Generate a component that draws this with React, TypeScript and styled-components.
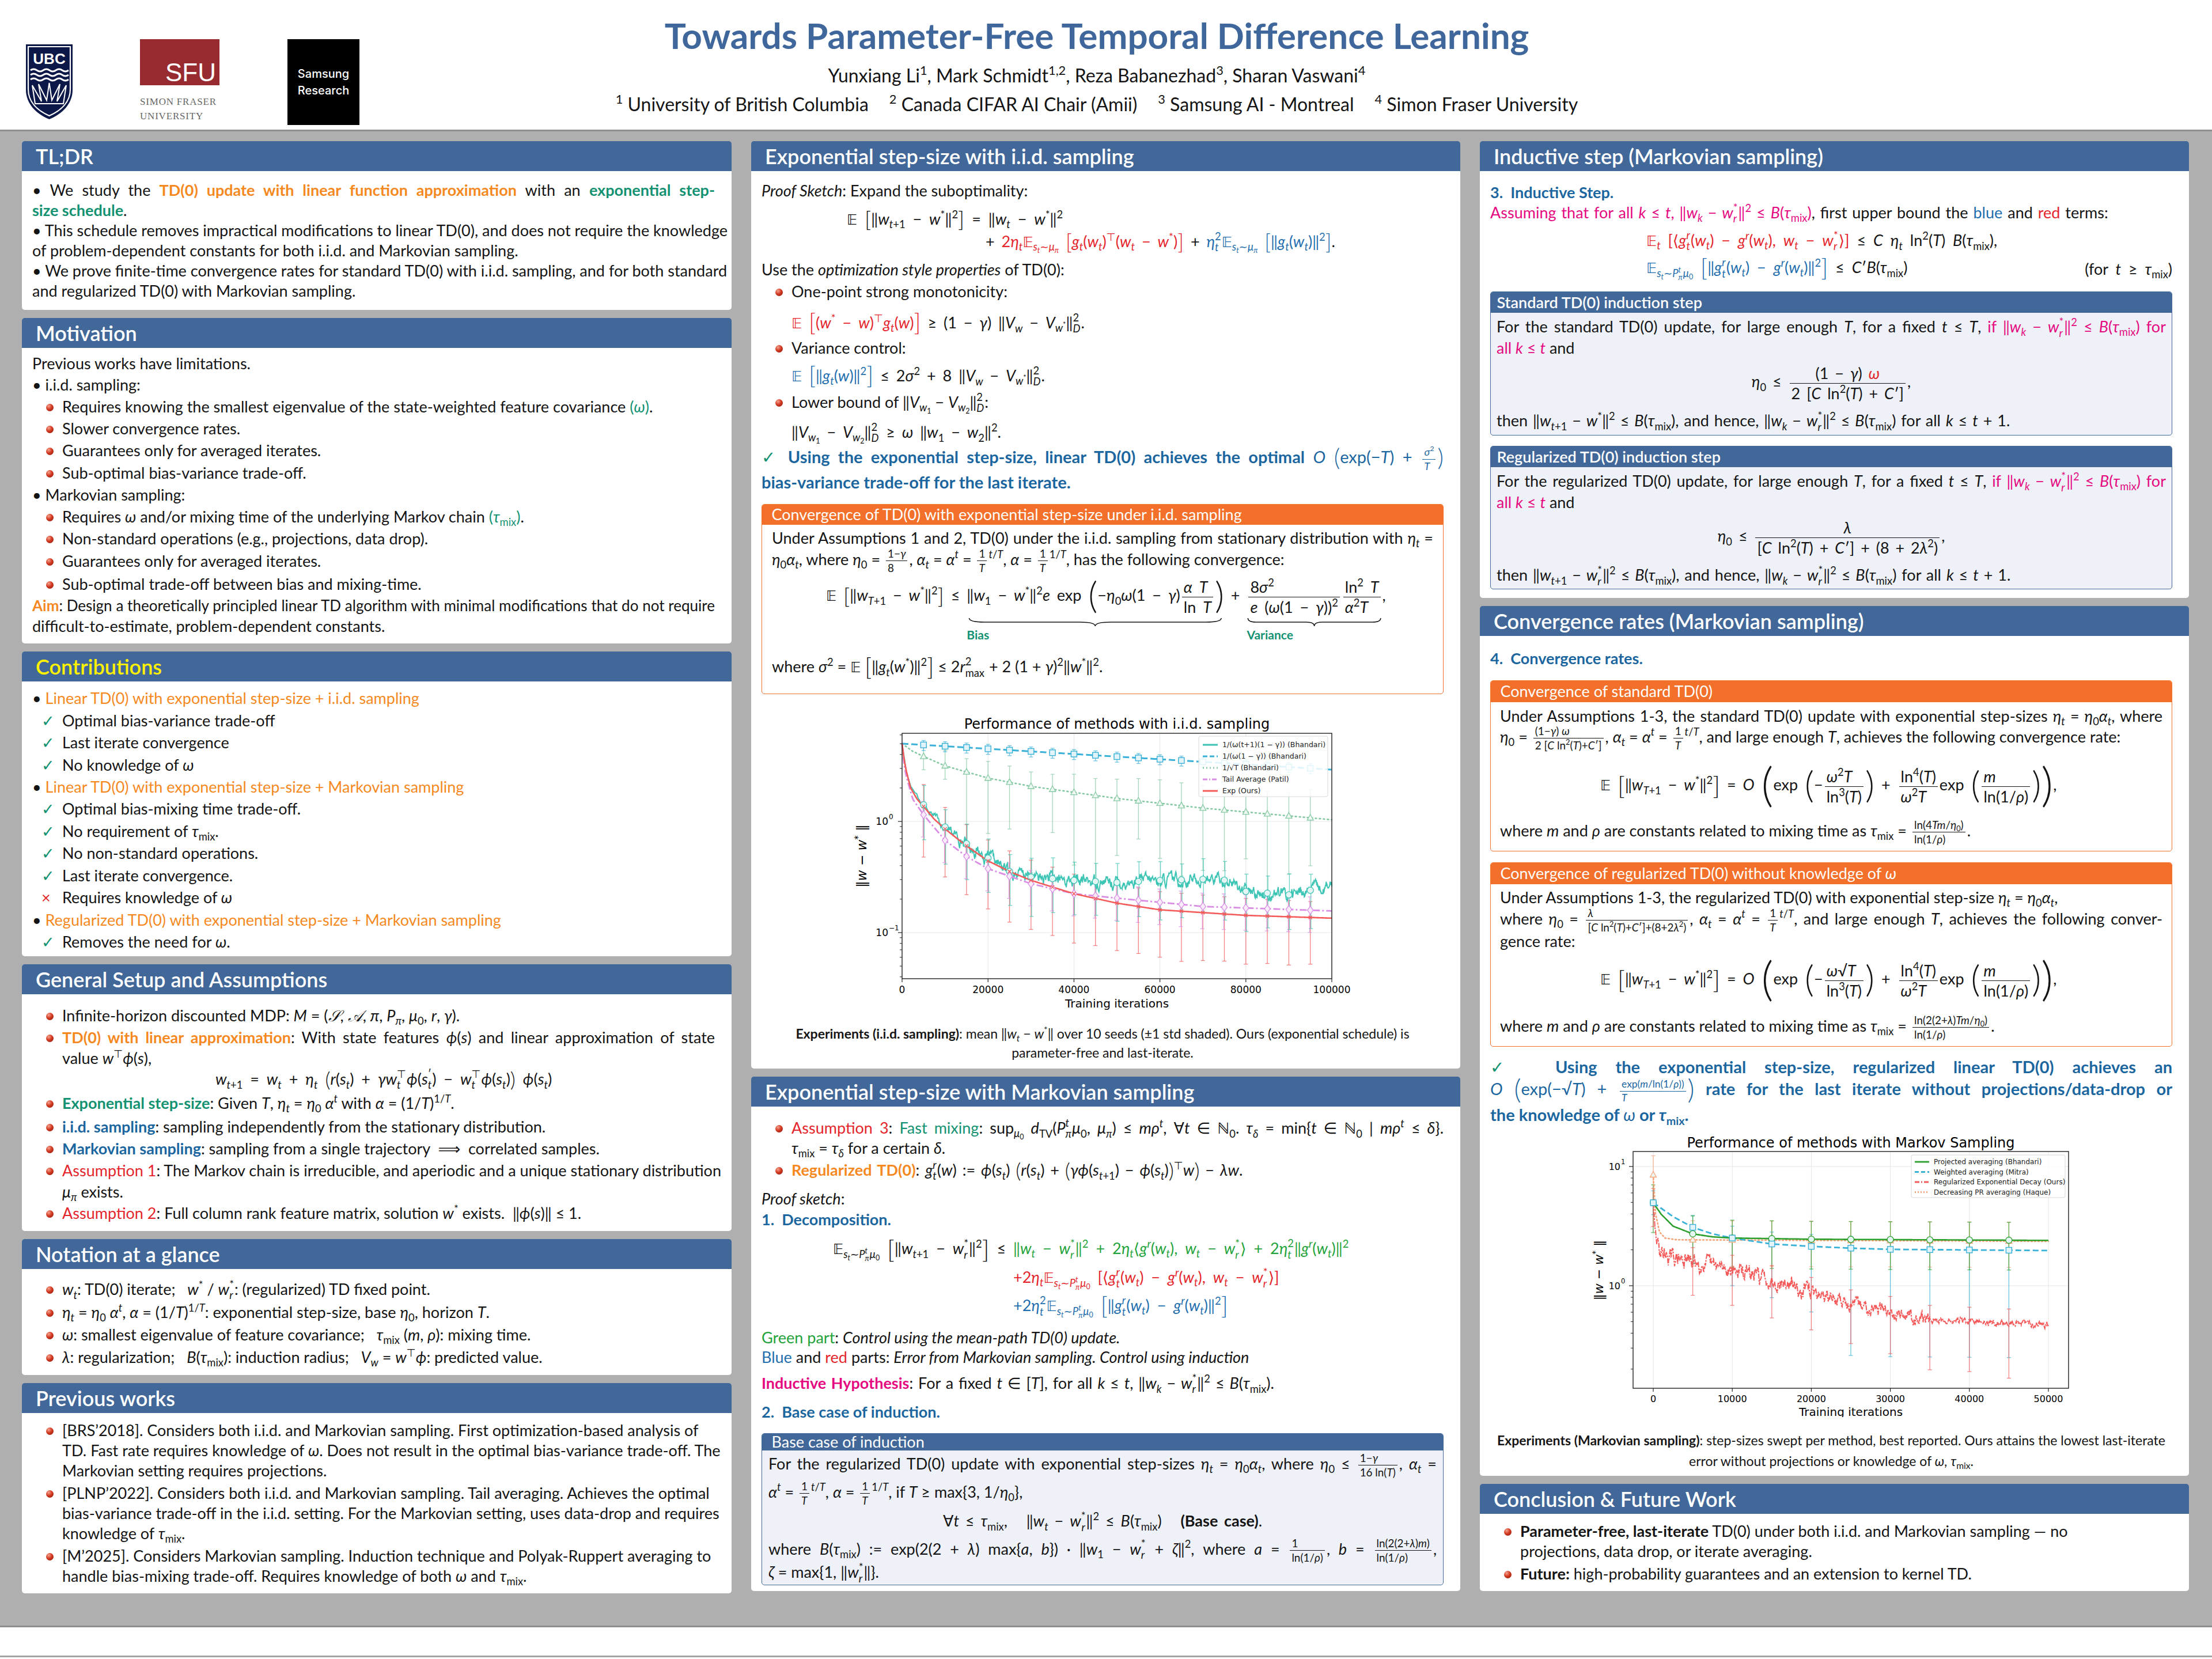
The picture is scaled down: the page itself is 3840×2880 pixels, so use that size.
import React from 'react';
import styled, { createGlobalStyle } from 'styled-components';

const COL = {
  head: '#426899',
  title: '#3f679b',
  orange: '#f5891f',
  teal: '#139272',
  blue: '#1b669f',
  sky: '#1f6eae',
  red: '#e4252b',
  pink: '#e5097f',
  green: '#1fa33a',
  box: '#f2702a',
  text: '#141414',
};

const Global = createGlobalStyle`
  html, body { margin: 0; padding: 0; }
  body {
    width: 3840px;
    background: #fff;
    font-family: Lato, "Noto Sans", "DejaVu Sans", sans-serif;
    color: ${COL.text};
  }
`;

/* ---------- page frame ---------- */

const Page = styled.div`
  width: 3840px;
  height: 2880px;
  display: flex;
  flex-direction: column;
  background: #fff;
`;

const Top = styled.header`
  height: 225px;
  border-bottom: 3px solid #8e8e8e;
  display: grid;
  grid-template-columns: 680px 1fr 712px;
  background: #fff;
`;

const Logos = styled.div`
  display: flex;
  align-items: flex-start;
  gap: 116px;
  padding: 68px 0 0 44px;
`;

const UbcWrap = styled.div`
  margin-top: 8px;
`;

const Samsung = styled.div`
  width: 125px;
  height: 149px;
  background: #000;
  color: #fff;
  display: flex;
  flex-direction: column;
  align-items: center;
  justify-content: center;
  font: 500 20px/29px Inter, "Liberation Sans", sans-serif;
`;

const TitleCol = styled.div`
  display: flex;
  flex-direction: column;
  align-items: center;
  padding-top: 24px;
`;

const Title = styled.h1`
  margin: 0;
  font: 700 62px/74px Lato, sans-serif;
  color: ${COL.title};
`;

const Authors = styled.div`
  margin-top: 13px;
  font-size: 32px;
  line-height: 40px;
`;

const Affil = styled.div`
  margin-top: 10px;
  font-size: 32px;
  line-height: 40px;
`;

const Aff = styled.span`
  & + & {
    margin-left: 36px;
  }
`;

const Main = styled.main`
  height: 2597px;
  box-sizing: border-box;
  background: #afafaf;
  border-bottom: 3px solid #8e8e8e;
  padding: 17px 38px 0;
  display: grid;
  grid-template-columns: 1232px 1231px 1231px;
  column-gap: 34px;
  align-items: start;
`;

const Foot = styled.div`
  height: 49px;
  border-bottom: 3px solid #a3a3a3;
  background: #fff;
`;

const Col = styled.div`
  display: flex;
  flex-direction: column;
  gap: 14px;
`;

const Block = styled.section`
  display: flex;
  flex-direction: column;
`;

const BTitle = styled.h2<{ $y?: boolean }>`
  margin: 0;
  height: 52px;
  background: ${COL.head};
  color: ${p => (p.$y ? '#fff200' : '#fff')};
  font: 600 36px/52px Lato, sans-serif;
  padding-left: 24px;
  border-radius: 5px 5px 0 0;
`;

const BBody = styled.div<{ $h: number; $pt: number }>`
  height: ${p => p.$h}px;
  box-sizing: border-box;
  background: #fff;
  border-radius: 0 0 5px 5px;
  padding: ${p => p.$pt}px 29px 0 18px;
  font-size: 27px;
`;

/* ---------- text rows ---------- */

const RowBox = styled.div<{ $h: number; $i: number; $t: number; $r: number }>`
  height: ${p => p.$h}px;
  margin-top: ${p => p.$t}px;
  padding-left: ${p => p.$i}px;
  padding-right: ${p => p.$r}px;
  display: flex;
  align-items: center;
`;

const ALIGN = { l: 'left', c: 'center', j: 'justify', r: 'right' } as const;

const RowText = styled.div<{ $a: 'l' | 'c' | 'j' | 'r'; $w: number; $f?: number }>`
  flex: 1;
  min-width: 0;
  white-space: nowrap;
  line-height: 1.25;
  word-spacing: ${p => p.$w}px;
  font-size: ${p => (p.$f ? `${p.$f}px` : 'inherit')};
  text-align: ${p => ALIGN[p.$a]};
  text-align-last: ${p => ALIGN[p.$a]};
`;

type LP = {
  h?: number;
  i?: number;
  t?: number;
  r?: number;
  w?: number;
  f?: number;
  a?: 'l' | 'c' | 'j' | 'r';
  children?: React.ReactNode;
};

function L({ h = 35, i = 0, t = 0, r = 0, w = 0, f, a = 'l', children }: LP) {
  return (
    <RowBox $h={h} $i={i} $t={t} $r={r}>
      <RowText $a={a} $w={w} $f={f}>
        {children}
      </RowText>
    </RowBox>
  );
}

const Spread = styled.span`
  display: flex;
  justify-content: space-between;
  align-items: center;
`;

const Ball = styled.span`
  display: inline-block;
  width: 13px;
  height: 13px;
  border-radius: 50%;
  margin-left: -28px;
  margin-right: 15px;
  vertical-align: 2px;
  background: radial-gradient(circle at 35% 30%, #f6a38f 0%, #d23a22 45%, #8a1409 100%);
`;

const Chk = styled.span<{ $x?: boolean }>`
  display: inline-block;
  width: 36px;
  margin-left: -36px;
  color: ${p => (p.$x ? COL.red : COL.teal)};
`;

const K = styled.span<{ $c: string }>`
  color: ${p => p.$c};
`;

const Bd = styled.b<{ $c?: string }>`
  font-weight: 700;
  color: ${p => p.$c ?? 'inherit'};
`;

const It = styled.i`
  font-style: italic;
`;

const Hl = styled.span`
  font-weight: 700;
  font-size: 29px;
  color: ${COL.blue};
`;

const Rm = styled.span`
  font-weight: 400;
`;

const Cap = styled.span`
  font-size: 23px;
`;

/* ---------- math pieces ---------- */

const V = styled.span`
  font-style: italic;
`;

const Sb = styled.sub`
  font-size: 0.68em;
  vertical-align: -0.35em;
  line-height: 0;
  word-spacing: 0;
`;

const Sp = styled.sup`
  font-size: 0.68em;
  vertical-align: 0.62em;
  line-height: 0;
  word-spacing: 0;
`;

const SSBox = styled.span`
  display: inline-flex;
  flex-direction: column;
  vertical-align: 0.66em;
  font-size: 0.68em;
  line-height: 1.05;
  margin-right: 1px;
  word-spacing: 0;
`;

function SS({ u, d }: { u: React.ReactNode; d: React.ReactNode }) {
  return (
    <SSBox>
      <span>{u}</span>
      <span>{d}</span>
    </SSBox>
  );
}

const FracBox = styled.span<{ $s: number }>`
  display: inline-flex;
  flex-direction: column;
  align-items: stretch;
  vertical-align: middle;
  text-align: center;
  font-size: ${p => p.$s}em;
  line-height: 1.18;
  margin: 0 3px;
`;

const FNum = styled.span`
  padding: 0 3px 1px;
  border-bottom: 1.5px solid currentColor;
`;

const FDen = styled.span`
  padding: 1px 3px 0;
`;

function Fr({ n, d, s = 1 }: { n: React.ReactNode; d: React.ReactNode; s?: number }) {
  return (
    <FracBox $s={s}>
      <FNum>{n}</FNum>
      <FDen>{d}</FDen>
    </FracBox>
  );
}

const Dl = styled.span<{ $s: number }>`
  display: inline-block;
  font-size: ${p => p.$s}em;
  line-height: 0;
  font-weight: 300;
  vertical-align: middle;
  transform: translateY(-0.08em);
`;

const DS = styled.span`
  font-family: "DejaVu Sans", sans-serif;
  font-size: 0.92em;
`;

const UBox = styled.span`
  display: inline-flex;
  flex-direction: column;
  align-items: stretch;
`;

const UBrace = styled.svg`
  display: block;
  width: 100%;
  height: 16px;
  margin-top: 2px;
`;

const ULabel = styled.span`
  font-size: 0.78em;
  font-weight: 700;
  color: ${COL.teal};
  text-align: center;
  line-height: 1.3;
`;

function UB({ label, children }: { label: string; children: React.ReactNode }) {
  return (
    <UBox>
      <span>{children}</span>
      <UBrace viewBox="0 0 100 16" preserveAspectRatio="none">
        <path
          d="M1 1 Q1 8 7 8 L44 8 Q50 8 50 15 Q50 8 56 8 L93 8 Q99 8 99 1"
          fill="none"
          stroke="#141414"
          strokeWidth="1.6"
          vectorEffect="non-scaling-stroke"
        />
      </UBrace>
      <ULabel>{label}</ULabel>
    </UBox>
  );
}

const Wt = () => (
  <>
    <V>w</V>
    <Sb>
      <V>t</V>
    </Sb>
  </>
);
const Ws = () => (
  <>
    <V>w</V>
    <Sp>*</Sp>
  </>
);
const Wr = () => (
  <>
    <V>w</V>
    <SS u="*" d={<V>r</V>} />
  </>
);
const Wk = () => (
  <>
    <V>w</V>
    <Sb>
      <V>k</V>
    </Sb>
  </>
);
const W1 = () => (
  <>
    <V>w</V>
    <Sb>
      <V>t</V>+1
    </Sb>
  </>
);
const Tm = () => (
  <>
    <V>τ</V>
    <Sb>mix</Sb>
  </>
);
const Et = ({ p }: { p?: string }) =>
  p ? (
    <>
      <V>η</V>
      <SS u={p} d={<V>t</V>} />
    </>
  ) : (
    <>
      <V>η</V>
      <Sb>
        <V>t</V>
      </Sb>
    </>
  );
const E0 = () => (
  <>
    <V>η</V>
    <Sb>0</Sb>
  </>
);
const At = () => (
  <>
    <V>α</V>
    <Sb>
      <V>t</V>
    </Sb>
  </>
);
const Ex = () => <DS>𝔼</DS>;
const Pmu = () => (
  <>
    <V>s</V>
    <Sb>
      <V>t</V>
    </Sb>
    ∼<V>P</V>
    <SS u={<V>t</V>} d={<V>π</V>} />
    <V>μ</V>
    <Sb>0</Sb>
  </>
);
const Esp = () => (
  <>
    <Ex />
    <Sb>
      <Pmu />
    </Sb>
  </>
);
const Emu = () => (
  <>
    <Ex />
    <Sb>
      <V>s</V>
      <Sb>
        <V>t</V>
      </Sb>
      ∼<V>μ</V>
      <Sb>
        <V>π</V>
      </Sb>
    </Sb>
  </>
);
const Btm = () => (
  <>
    <V>B</V>(<Tm />)
  </>
);
const Grt = () => (
  <>
    <V>g</V>
    <SS u={<V>r</V>} d={<V>t</V>} />(<Wt />)
  </>
);
const Gr = () => (
  <>
    <V>g</V>
    <Sp>
      <V>r</V>
    </Sp>
    (<Wt />)
  </>
);
const Gt = ({ a }: { a: React.ReactNode }) => (
  <>
    <V>g</V>
    <Sb>
      <V>t</V>
    </Sb>
    ({a})
  </>
);
const Nm = ({ children, p = '2' }: { children: React.ReactNode; p?: string }) => (
  <>
    ‖{children}‖{p ? <Sp>{p}</Sp> : null}
  </>
);
const OneT = ({ e }: { e: React.ReactNode }) => (
  <>
    <Fr s={0.7} n="1" d={<V>T</V>} />
    <Sp>{e}</Sp>
  </>
);
const VW = ({ s }: { s: React.ReactNode }) => (
  <>
    <V>V</V>
    <Sb>{s}</Sb>
  </>
);
const Wn = ({ n }: { n: string }) => (
  <>
    <V>w</V>
    <Sb>{n}</Sb>
  </>
);

/* ---------- sub boxes ---------- */

const Box = styled.div<{ $c: string; $h: number; $t: number; $bg: string }>`
  margin-top: ${p => p.$t}px;
  height: ${p => p.$h}px;
  box-sizing: border-box;
  border: 1.5px solid ${p => p.$c};
  border-radius: 5px;
  background: ${p => p.$bg};
  overflow: hidden;
`;

const BoxHead = styled.div<{ $c: string; $h: number; $b?: boolean }>`
  height: ${p => p.$h}px;
  line-height: ${p => p.$h}px;
  margin: -1.5px -1.5px 0;
  background: ${p => p.$c};
  color: #fff;
  font-size: 27px;
  font-weight: ${p => (p.$b ? 600 : 400)};
  padding-left: ${p => (p.$b ? 12 : 18)}px;
`;

const BoxBody = styled.div<{ $p: number }>`
  padding: 0 ${p => p.$p}px;
`;

const Figure = styled.div<{ $t: number; $i: number }>`
  margin-top: ${p => p.$t}px;
  padding-left: ${p => p.$i}px;
  display: flex;
`;

/* ---------- charts ---------- */

type P = [number, number];

const lin = (pts: P[], t: number) => {
  if (t <= pts[0][0]) return pts[0][1];
  for (let k = 1; k < pts.length; k++) {
    if (t <= pts[k][0]) {
      const [a, va] = pts[k - 1];
      const [b, vb] = pts[k];
      return va + ((vb - va) * (t - a)) / (b - a);
    }
  }
  return pts[pts.length - 1][1];
};

const pd = (pts: P[]) => pts.map((p, k) => `${k ? 'L' : 'M'}${p[0].toFixed(1)} ${p[1].toFixed(1)}`).join('');

const rng = (seed: number) => {
  let s = seed;
  return () => {
    s = (s * 1664525 + 1013904223) % 4294967296;
    return s / 4294967296;
  };
};

const CH = {
  teal: '#3cc4b4',
  sky: '#3ab2d8',
  mint: '#86c9a4',
  violet: '#d98ee4',
  red: '#f45a5a',
  green: '#2ca02c',
  salmon: '#f6a47a',
  grid: '#e6e6e6',
};

function ErrBar({ x, y1, y2, c }: { x: number; y1: number; y2: number; c: string }) {
  return (
    <g stroke={c} strokeWidth={1.3} opacity={0.75}>
      <line x1={x} x2={x} y1={y1} y2={y2} />
      <line x1={x - 3.5} x2={x + 3.5} y1={y1} y2={y1} />
      <line x1={x - 3.5} x2={x + 3.5} y1={y2} y2={y2} />
    </g>
  );
}

const Sq = ({ x, y, c }: { x: number; y: number; c: string }) => (
  <rect x={x - 5} y={y - 5} width={10} height={10} fill="#e2f3f9" stroke={c} strokeWidth={1.4} />
);
const Tri = ({ x, y, c }: { x: number; y: number; c: string }) => (
  <path d={`M${x} ${y - 6}L${x + 5.5} ${y + 4}L${x - 5.5} ${y + 4}Z`} fill="#eef8f2" stroke={c} strokeWidth={1.3} />
);
const Ci = ({ x, y, c }: { x: number; y: number; c: string }) => (
  <circle cx={x} cy={y} r={5.5} fill="#e3f6f3" stroke={c} strokeWidth={1.3} />
);
const Dia = ({ x, y, c }: { x: number; y: number; c: string }) => (
  <path d={`M${x} ${y - 7}L${x + 5} ${y}L${x} ${y + 7}L${x - 5} ${y}Z`} fill="#f8ecfa" stroke={c} strokeWidth={1.3} />
);
const Xm = ({ x, y, c }: { x: number; y: number; c: string }) => (
  <path d={`M${x - 3} ${y - 3}L${x + 3} ${y + 3}M${x + 3} ${y - 3}L${x - 3} ${y + 3}`} stroke={c} strokeWidth={1.4} />
);

const IIDS: Record<string, P[]> = {
  sky: [
    [0, 0.7],
    [100000, 0.466],
  ],
  mint: [
    [0, 0.7],
    [2500, 0.63],
    [5000, 0.585],
    [10000, 0.5],
    [15000, 0.445],
    [20000, 0.39],
    [30000, 0.316],
    [50000, 0.207],
    [70000, 0.12],
    [100000, 0.015],
  ],
  red: [
    [0, 0.7],
    [500, 0.55],
    [1000, 0.45],
    [2000, 0.3],
    [3500, 0.2],
    [5000, 0.135],
    [7500, 0.02],
    [10000, -0.068],
    [15000, -0.22],
    [20000, -0.355],
    [25000, -0.45],
    [30000, -0.53],
    [40000, -0.65],
    [50000, -0.735],
    [60000, -0.795],
    [80000, -0.845],
    [100000, -0.87],
  ],
  violet: [
    [0, 0.7],
    [500, 0.5],
    [1000, 0.4],
    [2500, 0.2],
    [5000, 0.06],
    [10000, -0.17],
    [15000, -0.315],
    [20000, -0.425],
    [30000, -0.56],
    [40000, -0.65],
    [50000, -0.69],
    [70000, -0.765],
    [100000, -0.805],
  ],
  teal: [
    [0, 0.7],
    [1000, 0.45],
    [2000, 0.32],
    [5000, 0.15],
    [10000, -0.05],
    [15000, -0.2],
    [20000, -0.33],
    [25000, -0.45],
    [30000, -0.5],
    [40000, -0.53],
    [50000, -0.55],
    [60000, -0.53],
    [70000, -0.52],
    [76000, -0.53],
    [80000, -0.63],
    [90000, -0.66],
    [95000, -0.62],
    [100000, -0.6],
  ],
};

const TickFont = '"DejaVu Sans", sans-serif';

function IidChart() {
  const X = (t: number) => 86 + (746 * t) / 1e5;
  const Y = (v: number) => 191 - 193 * v;
  const curve = (pts: P[], n = 500) =>
    pd(
      Array.from({ length: n + 1 }, (_, k) => {
        const t = (k * 1e5) / n;
        return [X(t), Y(lin(pts, t))] as P;
      }),
    );
  const r = rng(17);
  let z = 0;
  const tealPts: P[] = [];
  for (let k = 0; k <= 1000; k++) {
    const t = k * 100;
    z = 0.78 * z + (r() - 0.5) * 0.075;
    const amp = Math.min(1, t / 15000);
    tealPts.push([X(t), Y(lin(IIDS.teal, t) + z * amp)]);
  }
  const marks = Array.from({ length: 19 }, (_, k) => (k + 1) * 5000);
  const r2 = rng(5);
  const minor: number[] = [];
  [-2, -1, 0].forEach(dec => {
    for (let m = 2; m <= 9; m++) {
      const y = Y(dec + Math.log10(m));
      if (y > 38 && y < 464) minor.push(y);
    }
  });
  return (
    <svg width={880} height={525} viewBox="0 0 880 525" fontFamily={TickFont}>
      <text x={459} y={30} textAnchor="middle" fontSize={24} fill="#000">
        Performance of methods with i.i.d. sampling
      </text>
      {[0, 20000, 40000, 60000, 80000, 100000].map(t => (
        <line key={t} x1={X(t)} x2={X(t)} y1={38} y2={464} stroke={CH.grid} strokeWidth={1} />
      ))}
      {[0, -1].map(v => (
        <line key={v} x1={86} x2={832} y1={Y(v)} y2={Y(v)} stroke={CH.grid} strokeWidth={1} />
      ))}
      <g>
        {marks.map(t => {
          const vm = lin(IIDS.mint, t);
          const up = 0.09 + 0.12 * (t / 1e5) + r2() * 0.05;
          const dn = t < 15000 ? 0.12 : 0.3 + r2() * 0.55;
          return <ErrBar key={'m' + t} x={X(t)} y1={Y(vm + up)} y2={Y(vm - dn)} c={CH.mint} />;
        })}
        {marks.map(t => {
          const v = lin(IIDS.red, t);
          return <ErrBar key={'r' + t} x={X(t)} y1={Y(v + 0.2 - 0.06 * (t / 1e5))} y2={Y(v - 0.42 - 0.04 * r2())} c={CH.red} />;
        })}
        {marks.map(t => {
          const v = lin(IIDS.teal, t);
          return <ErrBar key={'t' + t} x={X(t) + 1} y1={Y(v + 0.14 + 0.05 * r2())} y2={Y(v - 0.3 - 0.06 * r2())} c={CH.teal} />;
        })}
        {marks.map(t => {
          const v = lin(IIDS.violet, t);
          return <ErrBar key={'v' + t} x={X(t) - 1} y1={Y(v + 0.12)} y2={Y(v - 0.2)} c={CH.violet} />;
        })}
        {marks.map(t => {
          const v = lin(IIDS.sky, t);
          return <ErrBar key={'s' + t} x={X(t)} y1={Y(v + 0.04)} y2={Y(v - 0.05)} c={CH.sky} />;
        })}
      </g>
      <path d={curve(IIDS.mint)} fill="none" stroke={CH.mint} strokeWidth={2.6} strokeDasharray="2 5" strokeLinecap="round" />
      <path d={curve(IIDS.sky)} fill="none" stroke={CH.sky} strokeWidth={3} strokeDasharray="11 5" />
      <path d={pd(tealPts)} fill="none" stroke={CH.teal} strokeWidth={2} />
      <path d={curve(IIDS.violet)} fill="none" stroke={CH.violet} strokeWidth={2.8} strokeDasharray="12 4 3 4" />
      <path d={curve(IIDS.red)} fill="none" stroke={CH.red} strokeWidth={2.6} />
      {marks.map(t => (
        <g key={'mk' + t}>
          <Sq x={X(t)} y={Y(lin(IIDS.sky, t))} c={CH.sky} />
          <Tri x={X(t)} y={Y(lin(IIDS.mint, t))} c={CH.mint} />
          <Ci x={X(t)} y={Y(lin(IIDS.teal, t))} c={CH.teal} />
          <Dia x={X(t)} y={Y(lin(IIDS.violet, t))} c={CH.violet} />
          <Xm x={X(t)} y={Y(lin(IIDS.red, t))} c={CH.red} />
        </g>
      ))}
      <rect x={86} y={38} width={746} height={426} fill="none" stroke="#222" strokeWidth={1.4} />
      {minor.map(y => (
        <line key={y} x1={82} x2={86} y1={y} y2={y} stroke="#222" strokeWidth={1} />
      ))}
      {[0, -1].map(v => (
        <g key={'yt' + v}>
          <line x1={79} x2={86} y1={Y(v)} y2={Y(v)} stroke="#222" strokeWidth={1.2} />
          <text x={62} y={Y(v) + 6} textAnchor="end" fontSize={17} fill="#000">
            10
          </text>
          <text x={63} y={Y(v) - 4} fontSize={12} fill="#000">
            {v === 0 ? '0' : '−1'}
          </text>
        </g>
      ))}
      {[0, 20000, 40000, 60000, 80000, 100000].map(t => (
        <g key={'xt' + t}>
          <line x1={X(t)} x2={X(t)} y1={464} y2={470} stroke="#222" strokeWidth={1.2} />
          <text x={X(t)} y={489} textAnchor="middle" fontSize={17} fill="#000">
            {t}
          </text>
        </g>
      ))}
      <text x={459} y={514} textAnchor="middle" fontSize={20} fill="#000">
        Training iterations
      </text>
      <text transform="translate(24 251) rotate(-90)" textAnchor="middle" fontSize={23} fill="#000">
        ‖<tspan fontStyle="italic">w</tspan> − <tspan fontStyle="italic">w</tspan>
        <tspan dy={-9} fontSize={15}>
          *
        </tspan>
        <tspan dy={9}> ‖</tspan>
      </text>
      <g fontSize={12.5} fill="#222">
        <rect x={601} y={43} width={224} height={105} rx={3} fill="#fff" fillOpacity={0.85} stroke="#d8d8d8" />
        {[
          { c: CH.teal, dash: '', l: '1/(ω(t+1)(1 − γ)) (Bhandari)' },
          { c: CH.sky, dash: '8 4', l: '1/(ω(1 − γ)) (Bhandari)' },
          { c: CH.mint, dash: '2 4', l: '1/√T (Bhandari)' },
          { c: CH.violet, dash: '8 3 2 3', l: 'Tail Average (Patil)' },
          { c: CH.red, dash: '', l: 'Exp (Ours)' },
        ].map((e, k) => (
          <g key={e.l}>
            <line x1={608} x2={634} y1={58 + k * 20} y2={58 + k * 20} stroke={e.c} strokeWidth={3} strokeDasharray={e.dash || undefined} />
            <text x={642} y={62 + k * 20}>
              {e.l}
            </text>
          </g>
        ))}
      </g>
    </svg>
  );
}

const MKS: Record<string, P[]> = {
  green: [
    [0, 0.696],
    [1000, 0.6],
    [2500, 0.5],
    [5000, 0.435],
    [7500, 0.41],
    [10000, 0.4],
    [20000, 0.39],
    [50000, 0.38],
  ],
  blue: [
    [0, 0.696],
    [2500, 0.58],
    [5000, 0.49],
    [7500, 0.435],
    [10000, 0.4],
    [15000, 0.35],
    [20000, 0.33],
    [25000, 0.315],
    [30000, 0.305],
    [40000, 0.3],
    [50000, 0.295],
  ],
  salmon: [
    [0, 0.93],
    [300, 0.6],
    [800, 0.45],
    [1500, 0.4],
    [3000, 0.385],
    [50000, 0.372],
  ],
  red: [
    [0, 0.696],
    [300, 0.42],
    [800, 0.3],
    [2000, 0.24],
    [5000, 0.2],
    [10000, 0.135],
    [15000, 0.05],
    [20000, -0.05],
    [25000, -0.155],
    [30000, -0.21],
    [35000, -0.285],
    [40000, -0.3],
    [45000, -0.315],
    [50000, -0.32],
  ],
};

function MarkovChart() {
  const X = (t: number) => 111 + (686 * t) / 5e4;
  const Y = (v: number) => 272 - 207 * v;
  const curve = (pts: P[], n = 500) =>
    pd(
      Array.from({ length: n + 1 }, (_, k) => {
        const t = (k * 5e4) / n;
        return [X(t), Y(lin(pts, t))] as P;
      }),
    );
  const r = rng(29);
  let z = 0;
  const redPts: P[] = [];
  for (let k = 0; k <= 1000; k++) {
    const t = k * 50;
    z = 0.7 * z + (r() - 0.5) * 0.09;
    const amp = t < 300 ? 0 : t < 20000 ? 1 : t < 35000 ? 0.8 : 0.4;
    redPts.push([X(t), Y(lin(MKS.red, t) + z * amp)]);
  }
  const marks = Array.from({ length: 10 }, (_, k) => k * 5000);
  const redDn = [0.2, 0.28, 0.3, 0.32, 0.32, 0.33, 0.36, 0.42, 0.42, 0.46];
  const blueDn = [0.1, 0.3, 0.4, 0.45, 0.55, 0.9, 0.9, 0.9, 0.9, 0.9];
  const minor: number[] = [];
  [-1, 0, 1].forEach(dec => {
    for (let m = 2; m <= 9; m++) {
      const y = Y(dec + Math.log10(m));
      if (y > 39 && y < 450) minor.push(y);
    }
  });
  return (
    <svg width={860} height={500} viewBox="0 0 860 500" fontFamily={TickFont}>
      <text x={454} y={32} textAnchor="middle" fontSize={24} fill="#000">
        Performance of methods with Markov Sampling
      </text>
      {[0, 10000, 20000, 30000, 40000, 50000].map(t => (
        <line key={t} x1={X(t)} x2={X(t)} y1={39} y2={450} stroke={CH.grid} strokeWidth={1} />
      ))}
      {[0, 1].map(v => (
        <line key={v} x1={76} x2={832} y1={Y(v)} y2={Y(v)} stroke={CH.grid} strokeWidth={1} />
      ))}
      {marks.map((t, k) => (
        <g key={'e' + t}>
          <ErrBar x={X(t)} y1={Y(lin(MKS.blue, t) + 0.1)} y2={Y(lin(MKS.blue, t) - blueDn[k])} c={CH.sky} />
          <ErrBar x={X(t)} y1={Y(lin(MKS.salmon, t) + 0.16)} y2={Y(lin(MKS.salmon, t) - 0.22)} c={CH.salmon} />
          <ErrBar x={X(t)} y1={Y(lin(MKS.green, t) + 0.15)} y2={Y(lin(MKS.green, t) - 0.25)} c={CH.green} />
          <ErrBar x={X(t)} y1={Y(lin(MKS.red, t) + 0.12)} y2={Y(lin(MKS.red, t) - redDn[k])} c={CH.red} />
        </g>
      ))}
      <path d={curve(MKS.salmon)} fill="none" stroke={CH.salmon} strokeWidth={2.6} strokeDasharray="2 4" strokeLinecap="round" />
      <path d={curve(MKS.blue)} fill="none" stroke={CH.sky} strokeWidth={2.8} strokeDasharray="10 5" />
      <path d={curve(MKS.green)} fill="none" stroke={CH.green} strokeWidth={2.6} />
      <path d={pd(redPts)} fill="none" stroke={CH.red} strokeWidth={2} strokeDasharray="9 2 3 2" />
      {marks.map(t => (
        <g key={'m' + t}>
          <Tri x={X(t)} y={Y(lin(MKS.salmon, t))} c={CH.salmon} />
          <Ci x={X(t)} y={Y(lin(MKS.green, t))} c={CH.green} />
          <Sq x={X(t)} y={Y(lin(MKS.blue, t))} c={CH.sky} />
        </g>
      ))}
      <rect x={76} y={39} width={756} height={411} fill="none" stroke="#222" strokeWidth={1.4} />
      {minor.map(y => (
        <line key={y} x1={72} x2={76} y1={y} y2={y} stroke="#222" strokeWidth={1} />
      ))}
      {[1, 0].map(v => (
        <g key={'yt' + v}>
          <line x1={69} x2={76} y1={Y(v)} y2={Y(v)} stroke="#222" strokeWidth={1.2} />
          <text x={54} y={Y(v) + 6} textAnchor="end" fontSize={16} fill="#000">
            10
          </text>
          <text x={55} y={Y(v) - 4} fontSize={11.5} fill="#000">
            {v}
          </text>
        </g>
      ))}
      {[0, 10000, 20000, 30000, 40000, 50000].map(t => (
        <g key={'xt' + t}>
          <line x1={X(t)} x2={X(t)} y1={450} y2={456} stroke="#222" strokeWidth={1.2} />
          <text x={X(t)} y={474} textAnchor="middle" fontSize={16} fill="#000">
            {t}
          </text>
        </g>
      ))}
      <text x={454} y={498} textAnchor="middle" fontSize={20} fill="#000">
        Training iterations
      </text>
      <text transform="translate(24 245) rotate(-90)" textAnchor="middle" fontSize={22} fill="#000">
        ‖<tspan fontStyle="italic">w</tspan> − <tspan fontStyle="italic">w</tspan>
        <tspan dy={-9} fontSize={14}>
          *
        </tspan>
        <tspan dy={9}> ‖</tspan>
      </text>
      <g fontSize={12} fill="#222">
        <rect x={559} y={45} width={267} height={74} rx={3} fill="#fff" fillOpacity={0.85} stroke="#d8d8d8" />
        {[
          { c: CH.green, dash: '', l: 'Projected averaging (Bhandari)' },
          { c: CH.sky, dash: '7 4', l: 'Weighted averaging (Mitra)' },
          { c: CH.red, dash: '8 3 2 3', l: 'Regularized Exponential Decay (Ours)' },
          { c: CH.salmon, dash: '2 3', l: 'Decreasing PR averaging (Haque)' },
        ].map((e, k) => (
          <g key={e.l}>
            <line x1={565} x2={590} y1={57 + k * 17.5} y2={57 + k * 17.5} stroke={e.c} strokeWidth={2.8} strokeDasharray={e.dash || undefined} />
            <text x={598} y={61 + k * 17.5}>
              {e.l}
            </text>
          </g>
        ))}
      </g>
    </svg>
  );
}

/* ---------- logos ---------- */

function UbcLogo() {
  return (
    <svg width={83} height={132} viewBox="0 0 83 132">
      <path d="M1 1H82V80C82 104 64 122 41.5 131C19 122 1 104 1 80Z" fill="#0c1848" />
      <path d="M5 5H78V79C78 101 62 116 41.5 125C21 116 5 101 5 79Z" fill="none" stroke="#fff" strokeWidth={2.2} />
      <text x={41.5} y={35} textAnchor="middle" fill="#fff" fontFamily='"Liberation Sans", sans-serif' fontWeight={700} fontSize={26}>
        UBC
      </text>
      {[46, 54, 62].map(y => (
        <path key={y} d={`M9 ${y} q5.5 -4 11 0 t11 0 t11 0 t11 0 t11 0 t11 0`} stroke="#fff" strokeWidth={3} fill="none" />
      ))}
      <path d="M12 72L28 100L23 70L37 98L41.5 68L46 98L60 70L55 100L71 72L66 104L17 104Z" fill="none" stroke="#fff" strokeWidth={2} />
    </svg>
  );
}

function SfuLogo() {
  return (
    <svg width={140} height={146} viewBox="0 0 140 146">
      <rect x={0} y={0} width={138} height={80} fill="#982b30" />
      <text x={132} y={73} textAnchor="end" fill="#fff" fontFamily='"Liberation Sans", sans-serif' fontSize={44}>
        SFU
      </text>
      <text x={0} y={114} fill="#666" fontFamily='"Liberation Serif", serif' fontSize={17} letterSpacing={0.8}>
        SIMON FRASER
      </text>
      <text x={0} y={139} fill="#666" fontFamily='"Liberation Serif", serif' fontSize={17} letterSpacing={0.8}>
        UNIVERSITY
      </text>
    </svg>
  );
}

/* ---------- columns ---------- */

function LeftColumn() {
  return (
    <Col>
      <Block>
        <BTitle>TL;DR</BTitle>
        <BBody $h={241} $pt={15}>
          <L a="j">
            • We study the <Bd $c={COL.orange}>TD(0) update with linear function approximation</Bd> with an{' '}
            <Bd $c={COL.teal}>exponential step-</Bd>
          </L>
          <L>
            <Bd $c={COL.teal}>size schedule</Bd>.
          </L>
          <L a="j">• This schedule removes impractical modifications to linear TD(0), and does not require the knowledge</L>
          <L>of problem-dependent constants for both i.i.d. and Markovian sampling.</L>
          <L a="j">• We prove finite-time convergence rates for standard TD(0) with i.i.d. sampling, and for both standard</L>
          <L>and regularized TD(0) with Markovian sampling.</L>
        </BBody>
      </Block>

      <Block>
        <BTitle>Motivation</BTitle>
        <BBody $h={513} $pt={8}>
          <L h={37}>Previous works have limitations.</L>
          <L h={38}>• i.i.d. sampling:</L>
          <L h={38} i={52}>
            <Ball />
            Requires knowing the smallest eigenvalue of the state-weighted feature covariance{' '}
            <K $c={COL.teal}>
              (<V>ω</V>)
            </K>
            .
          </L>
          <L h={38} i={52}>
            <Ball />
            Slower convergence rates.
          </L>
          <L h={38} i={52}>
            <Ball />
            Guarantees only for averaged iterates.
          </L>
          <L h={39} i={52}>
            <Ball />
            Sub-optimal bias-variance trade-off.
          </L>
          <L h={38}>• Markovian sampling:</L>
          <L h={38} i={52}>
            <Ball />
            Requires <V>ω</V> and/or mixing time of the underlying Markov chain{' '}
            <K $c={COL.teal}>
              (<Tm />)
            </K>
            .
          </L>
          <L h={38} i={52}>
            <Ball />
            Non-standard operations (e.g., projections, data drop).
          </L>
          <L h={39} i={52}>
            <Ball />
            Guarantees only for averaged iterates.
          </L>
          <L h={41} i={52}>
            <Ball />
            Sub-optimal trade-off between bias and mixing-time.
          </L>
          <L a="j" f={26}>
            <Bd $c={COL.orange}>Aim</Bd>: Design a theoretically principled linear TD algorithm with minimal modifications that do not require
          </L>
          <L>difficult-to-estimate, problem-dependent constants.</L>
        </BBody>
      </Block>

      <Block>
        <BTitle $y>Contributions</BTitle>
        <BBody $h={477} $pt={10}>
          <L h={38}>
            • <K $c={COL.orange}>Linear TD(0) with exponential step-size + i.i.d. sampling</K>
          </L>
          <L h={39} i={52}>
            <Chk>✓</Chk>Optimal bias-variance trade-off
          </L>
          <L h={38} i={52}>
            <Chk>✓</Chk>Last iterate convergence
          </L>
          <L h={39} i={52}>
            <Chk>✓</Chk>No knowledge of <V>ω</V>
          </L>
          <L h={38}>
            • <K $c={COL.orange}>Linear TD(0) with exponential step-size + Markovian sampling</K>
          </L>
          <L h={38} i={52}>
            <Chk>✓</Chk>Optimal bias-mixing time trade-off.
          </L>
          <L h={39} i={52}>
            <Chk>✓</Chk>No requirement of <Tm />.
          </L>
          <L h={38} i={52}>
            <Chk>✓</Chk>No non-standard operations.
          </L>
          <L h={39} i={52}>
            <Chk>✓</Chk>Last iterate convergence.
          </L>
          <L h={38} i={52}>
            <Chk $x>×</Chk>Requires knowledge of <V>ω</V>
          </L>
          <L h={39}>
            • <K $c={COL.orange}>Regularized TD(0) with exponential step-size + Markovian sampling</K>
          </L>
          <L h={38} i={52}>
            <Chk>✓</Chk>Removes the need for <V>ω</V>.
          </L>
        </BBody>
      </Block>

      <Block>
        <BTitle>General Setup and Assumptions</BTitle>
        <BBody $h={411} $pt={18}>
          <L h={38} i={52}>
            <Ball />
            Infinite-horizon discounted MDP: <V>M</V> = (<V>𝒮</V>, <V>𝒜</V>, <V>π</V>, <V>P</V>
            <Sb>
              <V>π</V>
            </Sb>
            , <V>μ</V>
            <Sb>0</Sb>, <V>r</V>, <V>γ</V>).
          </L>
          <L h={38} i={52} a="j">
            <Ball />
            <Bd $c={COL.orange}>TD(0) with linear approximation</Bd>: With state features <V>ϕ</V>(<V>s</V>) and linear approximation of state
          </L>
          <L h={34} i={52}>
            value <V>w</V>
            <Sp>⊤</Sp>
            <V>ϕ</V>(<V>s</V>),
          </L>
          <L h={40} i={318} w={6}>
            <W1 /> = <Wt /> + <Et /> <Dl $s={1.3}>(</Dl>
            <V>r</V>(<V>s</V>
            <Sb>
              <V>t</V>
            </Sb>
            ) + <V>γ</V>
            <V>w</V>
            <SS u="⊤" d={<V>t</V>} />
            <V>ϕ</V>(<V>s</V>
            <SS u="′" d={<V>t</V>} />) − <V>w</V>
            <SS u="⊤" d={<V>t</V>} />
            <V>ϕ</V>(<V>s</V>
            <Sb>
              <V>t</V>
            </Sb>
            )<Dl $s={1.3}>)</Dl> <V>ϕ</V>(<V>s</V>
            <Sb>
              <V>t</V>
            </Sb>
            )
          </L>
          <L h={42} i={52}>
            <Ball />
            <Bd $c={COL.teal}>Exponential step-size</Bd>: Given <V>T</V>, <Et /> = <E0 /> <V>α</V>
            <Sp>
              <V>t</V>
            </Sp>{' '}
            with <V>α</V> = (1/<V>T</V>)
            <Sp>
              1/<V>T</V>
            </Sp>
            .
          </L>
          <L h={39} i={52}>
            <Ball />
            <Bd $c={COL.blue}>i.i.d. sampling</Bd>: sampling independently from the stationary distribution.
          </L>
          <L h={38} i={52}>
            <Ball />
            <Bd $c={COL.blue}>Markovian sampling</Bd>: sampling from a single trajectory &nbsp;⟹&nbsp; correlated samples.
          </L>
          <L h={38} i={52} a="j">
            <Ball />
            <K $c={COL.red}>Assumption 1</K>: The Markov chain is irreducible, and aperiodic and a unique stationary distribution
          </L>
          <L h={35} i={52}>
            <V>μ</V>
            <Sb>
              <V>π</V>
            </Sb>{' '}
            exists.
          </L>
          <L h={40} i={52}>
            <Ball />
            <K $c={COL.red}>Assumption 2</K>: Full column rank feature matrix, solution <Ws /> exists. &nbsp;‖<V>ϕ</V>(<V>s</V>)‖ ≤ 1.
          </L>
        </BBody>
      </Block>

      <Block>
        <BTitle>Notation at a glance</BTitle>
        <BBody $h={184} $pt={17}>
          <L h={38} i={52}>
            <Ball />
            <Wt />: TD(0) iterate; &nbsp; <Ws /> / <Wr />: (regularized) TD fixed point.
          </L>
          <L h={40} i={52}>
            <Ball />
            <Et /> = <E0 /> <V>α</V>
            <Sp>
              <V>t</V>
            </Sp>
            , <V>α</V> = (1/<V>T</V>)
            <Sp>
              1/<V>T</V>
            </Sp>
            : exponential step-size, base <E0 />, horizon <V>T</V>.
          </L>
          <L h={38} i={52}>
            <Ball />
            <V>ω</V>: smallest eigenvalue of feature covariance; &nbsp; <Tm /> (<V>m</V>, <V>ρ</V>): mixing time.
          </L>
          <L h={40} i={52}>
            <Ball />
            <V>λ</V>: regularization; &nbsp; <Btm />: induction radius; &nbsp; <VW s={<V>w</V>} /> = <V>w</V>
            <Sp>⊤</Sp>
            <V>ϕ</V>: predicted value.
          </L>
        </BBody>
      </Block>

      <Block>
        <BTitle>Previous works</BTitle>
        <BBody $h={313} $pt={12}>
          <L i={52}>
            <Ball />
            [BRS’2018]. Considers both i.i.d. and Markovian sampling. First optimization-based analysis of
          </L>
          <L i={52}>
            TD. Fast rate requires knowledge of <V>ω</V>. Does not result in the optimal bias-variance trade-off. The
          </L>
          <L i={52}>Markovian setting requires projections.</L>
          <L i={52} t={4}>
            <Ball />
            [PLNP’2022]. Considers both i.i.d. and Markovian sampling. Tail averaging. Achieves the optimal
          </L>
          <L i={52}>bias-variance trade-off in the i.i.d. setting. For the Markovian setting, uses data-drop and requires</L>
          <L i={52}>
            knowledge of <Tm />.
          </L>
          <L i={52} t={4}>
            <Ball />
            [M’2025]. Considers Markovian sampling. Induction technique and Polyak-Ruppert averaging to
          </L>
          <L i={52}>
            handle bias-mixing trade-off. Requires knowledge of both <V>ω</V> and <Tm />.
          </L>
        </BBody>
      </Block>
    </Col>
  );
}

function MiddleColumn() {
  return (
    <Col>
      <Block>
        <BTitle>Exponential step-size with i.i.d. sampling</BTitle>
        <BBody $h={1558} $pt={16}>
          <L h={36}>
            <It>Proof Sketch</It>: Expand the suboptimality:
          </L>
          <L h={44} t={9} i={148} w={6}>
            <Ex /> <Dl $s={1.4}>[</Dl>
            <Nm>
              <W1 /> − <Ws />
            </Nm>
            <Dl $s={1.4}>]</Dl> = <Nm>
              <Wt /> − <Ws />
            </Nm>
          </L>
          <L h={36} i={389} w={5}>
            +{' '}
            <K $c={COL.red}>
              2<Et />
              <Emu /> <Dl $s={1.35}>[</Dl>
              <Gt a={<Wt />} />
              <Sp>⊤</Sp>(<Wt /> − <Ws />)<Dl $s={1.35}>]</Dl>
            </K>{' '}
            +{' '}
            <K $c={COL.sky}>
              <Et p="2" />
              <Emu /> <Dl $s={1.35}>[</Dl>
              <Nm>
                <Gt a={<Wt />} />
              </Nm>
              <Dl $s={1.35}>]</Dl>
            </K>
            .
          </L>
          <L h={36} t={12}>
            Use the <It>optimization style properties</It> of TD(0):
          </L>
          <L h={36} t={2} i={52}>
            <Ball />
            One-point strong monotonicity:
          </L>
          <L h={50} t={12} i={52} w={5}>
            <K $c={COL.red}>
              <Ex /> <Dl $s={1.5}>[</Dl>(<Ws /> − <V>w</V>)<Sp>⊤</Sp>
              <Gt a={<V>w</V>} />
              <Dl $s={1.5}>]</Dl>
            </K>{' '}
            ≥ (1 − <V>γ</V>) ‖<VW s={<V>w</V>} /> − <VW s={<Ws />} />‖<SS u="2" d={<V>D</V>} />.
          </L>
          <L h={36} i={52}>
            <Ball />
            Variance control:
          </L>
          <L h={50} t={6} i={52} w={5}>
            <K $c={COL.sky}>
              <Ex /> <Dl $s={1.5}>[</Dl>
              <Nm>
                <Gt a={<V>w</V>} />
              </Nm>
              <Dl $s={1.5}>]</Dl>
            </K>{' '}
            ≤ 2<V>σ</V>
            <Sp>2</Sp> + 8 ‖<VW s={<V>w</V>} /> − <VW s={<Ws />} />‖<SS u="2" d={<V>D</V>} />.
          </L>
          <L h={36} t={3} i={52}>
            <Ball />
            Lower bound of ‖<VW s={<Wn n="1" />} /> − <VW s={<Wn n="2" />} />‖<SS u="2" d={<V>D</V>} />:
          </L>
          <L h={50} t={9} i={52} w={5}>
            ‖<VW s={<Wn n="1" />} /> − <VW s={<Wn n="2" />} />‖<SS u="2" d={<V>D</V>} /> ≥ <V>ω</V>{' '}
            <Nm>
              <Wn n="1" /> − <Wn n="2" />
            </Nm>
            .
          </L>
          <L h={40} t={1} a="j">
            <Hl>
              <K $c={COL.teal}>✓</K> Using the exponential step-size, linear TD(0) achieves the optimal{' '}
              <Rm>
                <V>O</V> <Dl $s={1.4}>(</Dl>exp(−<V>T</V>) +{' '}
                <Fr
                  s={0.62}
                  n={
                    <>
                      <V>σ</V>
                      <Sp>2</Sp>
                    </>
                  }
                  d={<V>T</V>}
                />
                <Dl $s={1.4}>)</Dl>
              </Rm>
            </Hl>
          </L>
          <L h={40}>
            <Hl>bias-variance trade-off for the last iterate.</Hl>
          </L>

          <Box $c={COL.box} $h={330} $t={18} $bg="#fff">
            <BoxHead $c={COL.box} $h={36}>
              Convergence of TD(0) with exponential step-size under i.i.d. sampling
            </BoxHead>
            <BoxBody $p={17}>
              <L h={35} t={6} a="j">
                Under Assumptions 1 and 2, TD(0) under the i.i.d. sampling from stationary distribution with <Et /> =
              </L>
              <L h={40} t={2}>
                <E0 />
                <At />, where <E0 /> = <Fr s={0.7} n={<>1−<V>γ</V></>} d="8" />, <At /> = <V>α</V>
                <Sp>
                  <V>t</V>
                </Sp>{' '}
                = <OneT e={<><V>t</V>/<V>T</V></>} />, <V>α</V> = <OneT e={<>1/<V>T</V></>} />, has the following convergence:
              </L>
              <L h={132} i={94} w={5}>
                <Ex /> <Dl $s={1.4}>[</Dl>
                <Nm>
                  <V>w</V>
                  <Sb>
                    <V>T</V>+1
                  </Sb>{' '}
                  − <Ws />
                </Nm>
                <Dl $s={1.4}>]</Dl> ≤{' '}
                <UB label="Bias">
                  <Nm>
                    <Wn n="1" /> − <Ws />
                  </Nm>
                  <V>e</V> exp <Dl $s={2.3}>(</Dl>−<E0 />
                  <V>ω</V>(1 − <V>γ</V>)
                  <Fr
                    n={
                      <>
                        <V>α</V> <V>T</V>
                      </>
                    }
                    d={
                      <>
                        ln <V>T</V>
                      </>
                    }
                  />
                  <Dl $s={2.3}>)</Dl>
                </UB>{' '}
                +{' '}
                <UB label="Variance">
                  <Fr
                    n={
                      <>
                        8<V>σ</V>
                        <Sp>2</Sp>
                      </>
                    }
                    d={
                      <>
                        <V>e</V> (<V>ω</V>(1 − <V>γ</V>))<Sp>2</Sp>
                      </>
                    }
                  />
                  <Fr
                    n={
                      <>
                        ln<Sp>2</Sp> <V>T</V>
                      </>
                    }
                    d={
                      <>
                        <V>α</V>
                        <Sp>2</Sp>
                        <V>T</V>
                      </>
                    }
                  />
                </UB>
                ,
              </L>
              <L h={44} t={11}>
                where <V>σ</V>
                <Sp>2</Sp> = <Ex /> <Dl $s={1.5}>[</Dl>
                <Nm>
                  <Gt a={<Ws />} />
                </Nm>
                <Dl $s={1.5}>]</Dl> ≤ 2<V>r</V>
                <SS u="2" d="max" /> + 2 (1 + <V>γ</V>)<Sp>2</Sp>
                <Nm>
                  <Ws />
                </Nm>
                .
              </L>
            </BoxBody>
          </Box>

          <Figure $t={30} $i={158}>
            <IidChart />
          </Figure>
          <L h={33} t={16} a="c">
            <Cap>
              <Bd>Experiments (i.i.d. sampling)</Bd>: mean ‖<Wt /> − <Ws />‖ over 10 seeds (±1 std shaded). Ours (exponential schedule) is
            </Cap>
          </L>
          <L h={33} a="c">
            <Cap>parameter-free and last-iterate.</Cap>
          </L>
        </BBody>
      </Block>

      <Block>
        <BTitle>Exponential step-size with Markovian sampling</BTitle>
        <BBody $h={841} $pt={21}>
          <L h={34} i={52} a="j">
            <Ball />
            <K $c={COL.red}>Assumption 3</K>: <K $c={COL.teal}>Fast mixing</K>: sup
            <Sb>
              <V>μ</V>
              <Sb>0</Sb>
            </Sb>{' '}
            <V>d</V>
            <Sb>TV</Sb>(<V>P</V>
            <SS u={<V>t</V>} d={<V>π</V>} />
            <V>μ</V>
            <Sb>0</Sb>, <V>μ</V>
            <Sb>
              <V>π</V>
            </Sb>
            ) ≤ <V>mρ</V>
            <Sp>
              <V>t</V>
            </Sp>
            , ∀<V>t</V> ∈ ℕ<Sb>0</Sb>. <V>τ</V>
            <Sb>
              <V>δ</V>
            </Sb>{' '}
            = min{'{'}
            <V>t</V> ∈ ℕ<Sb>0</Sb> | <V>mρ</V>
            <Sp>
              <V>t</V>
            </Sp>{' '}
            ≤ <V>δ</V>
            {'}'}.
          </L>
          <L h={34} i={52}>
            <Tm /> = <V>τ</V>
            <Sb>
              <V>δ</V>
            </Sb>{' '}
            for a certain <V>δ</V>.
          </L>
          <L h={40} t={2} i={52} w={3}>
            <Ball />
            <Bd $c={COL.orange}>Regularized TD(0)</Bd>: <V>g</V>
            <SS u={<V>r</V>} d={<V>t</V>} />
            (<V>w</V>) := <V>ϕ</V>(<V>s</V>
            <Sb>
              <V>t</V>
            </Sb>
            ) <Dl $s={1.3}>(</Dl>
            <V>r</V>(<V>s</V>
            <Sb>
              <V>t</V>
            </Sb>
            ) + <Dl $s={1.3}>(</Dl>
            <V>γϕ</V>(<V>s</V>
            <Sb>
              <V>t</V>+1
            </Sb>
            ) − <V>ϕ</V>(<V>s</V>
            <Sb>
              <V>t</V>
            </Sb>
            )<Dl $s={1.3}>)</Dl>
            <Sp>⊤</Sp>
            <V>w</V>
            <Dl $s={1.3}>)</Dl> − <V>λw</V>.
          </L>
          <L h={36} t={11}>
            <It>Proof sketch</It>:
          </L>
          <L h={36}>
            <Bd $c={COL.blue}>1.&nbsp; Decomposition.</Bd>
          </L>
          <L h={56} t={7} i={124} w={6}>
            <Esp /> <Dl $s={1.6}>[</Dl>
            <Nm>
              <W1 /> − <Wr />
            </Nm>
            <Dl $s={1.6}>]</Dl> ≤{' '}
            <K $c={COL.green}>
              <Nm>
                <Wt /> − <Wr />
              </Nm>{' '}
              + 2<Et />⟨<Gr />, <Wt /> − <Wr />⟩ + 2<Et p="2" />
              <Nm>
                <Gr />
              </Nm>
            </K>
          </L>
          <L h={44} i={437} w={6}>
            <K $c={COL.red}>
              +2<Et />
              <Esp /> [⟨<Grt /> − <Gr />, <Wt /> − <Wr />⟩]
            </K>
          </L>
          <L h={54} i={437} w={6}>
            <K $c={COL.sky}>
              +2<Et p="2" />
              <Esp /> <Dl $s={1.5}>[</Dl>
              <Nm>
                <Grt /> − <Gr />
              </Nm>
              <Dl $s={1.5}>]</Dl>
            </K>
          </L>
          <L h={34} t={9}>
            <K $c={COL.green}>Green part</K>: <It>Control using the mean-path TD(0) update.</It>
          </L>
          <L h={34}>
            <K $c={COL.sky}>Blue</K> and <K $c={COL.red}>red</K> parts: <It>Error from Markovian sampling. Control using induction</It>
          </L>
          <L h={40} t={9} w={2}>
            <Bd $c={COL.pink}>Inductive Hypothesis</Bd>: For a fixed <V>t</V> ∈ [<V>T</V>], for all <V>k</V> ≤ <V>t</V>,{' '}
            <Nm>
              <Wk /> − <Wr />
            </Nm>{' '}
            ≤ <Btm />.
          </L>
          <L h={36} t={11}>
            <Bd $c={COL.blue}>2.&nbsp; Base case of induction.</Bd>
          </L>
          <Box $c={COL.head} $h={264} $t={19} $bg="#eef1f8">
            <BoxHead $c={COL.head} $h={30}>
              Base case of induction
            </BoxHead>
            <BoxBody $p={11}>
              <L h={40} t={6} a="j">
                For the regularized TD(0) update with exponential step-sizes <Et /> = <E0 />
                <At />, where <E0 /> ≤{' '}
                <Fr
                  s={0.7}
                  n={
                    <>
                      1−<V>γ</V>
                    </>
                  }
                  d={
                    <>
                      16 ln(<V>T</V>)
                    </>
                  }
                />
                , <At /> =
              </L>
              <L h={48} t={5}>
                <V>α</V>
                <Sp>
                  <V>t</V>
                </Sp>{' '}
                = <OneT e={<><V>t</V>/<V>T</V></>} />, <V>α</V> = <OneT e={<>1/<V>T</V></>} />, if <V>T</V> ≥ max{'{'}3, 1/<E0 />
                {'}'},
              </L>
              <L h={44} t={3} a="c" w={4}>
                ∀<V>t</V> ≤ <Tm />, &nbsp;&nbsp;
                <Nm>
                  <Wt /> − <Wr />
                </Nm>{' '}
                ≤ <Btm /> &nbsp;&nbsp;<Bd>(Base case)</Bd>.
              </L>
              <L h={48} t={4} a="j">
                where <Btm /> := exp(2(2 + <V>λ</V>) max{'{'}
                <V>a</V>, <V>b</V>
                {'}'}) · <Nm>
                  <Wn n="1" /> − <Wr /> + <V>ζ</V>
                </Nm>
                , where <V>a</V> = <Fr s={0.7} n="1" d={<>ln(1/<V>ρ</V>)</>} />, <V>b</V> ={' '}
                <Fr
                  s={0.7}
                  n={
                    <>
                      ln(2(2+<V>λ</V>)<V>m</V>)
                    </>
                  }
                  d={<>ln(1/<V>ρ</V>)</>}
                />
                ,
              </L>
              <L h={30}>
                <V>ζ</V> = max{'{'}1,{' '}
                <Nm p="">
                  <Wr />
                </Nm>
                {'}'}.
              </L>
            </BoxBody>
          </Box>
        </BBody>
      </Block>
    </Col>
  );
}

function RightColumn() {
  return (
    <Col>
      <Block>
        <BTitle>Inductive step (Markovian sampling)</BTitle>
        <BBody $h={741} $pt={19}>
          <L h={36}>
            <Bd $c={COL.blue}>3.&nbsp; Inductive Step.</Bd>
          </L>
          <L h={36} w={2}>
            <K $c={COL.pink}>
              Assuming that for all <V>k</V> ≤ <V>t</V>,{' '}
              <Nm>
                <Wk /> − <Wr />
              </Nm>{' '}
              ≤ <Btm />
            </K>
            , first upper bound the <K $c={COL.sky}>blue</K> and <K $c={COL.red}>red</K> terms:
          </L>
          <L h={44} t={8} i={271} w={6}>
            <K $c={COL.red}>
              <Ex />
              <Sb>
                <V>t</V>
              </Sb>{' '}
              [⟨<Grt /> − <Gr />, <Wt /> − <Wr />⟩]
            </K>{' '}
            ≤ <V>C</V> <Et /> ln<Sp>2</Sp>(<V>T</V>) <Btm />,
          </L>
          <L h={54} i={271} w={6}>
            <Spread>
              <span>
                <K $c={COL.sky}>
                  <Esp /> <Dl $s={1.5}>[</Dl>
                  <Nm>
                    <Grt /> − <Gr />
                  </Nm>
                  <Dl $s={1.5}>]</Dl>
                </K>{' '}
                ≤ <V>C</V>′<Btm />
              </span>
              <span>
                (for <V>t</V> ≥ <Tm />)
              </span>
            </Spread>
          </L>

          <Box $c={COL.head} $h={250} $t={12} $bg="#eef1f8">
            <BoxHead $c={COL.head} $h={37} $b>
              Standard TD(0) induction step
            </BoxHead>
            <BoxBody $p={10}>
              <L h={34} t={9} a="j">
                For the standard TD(0) update, for large enough <V>T</V>, for a fixed <V>t</V> ≤ <V>T</V>,{' '}
                <K $c={COL.pink}>
                  if{' '}
                  <Nm>
                    <Wk /> − <Wr />
                  </Nm>{' '}
                  ≤ <Btm /> for
                </K>
              </L>
              <L h={34} t={1}>
                <K $c={COL.pink}>
                  all <V>k</V> ≤ <V>t</V>
                </K>{' '}
                and
              </L>
              <L h={84} t={3} a="c" w={4}>
                <E0 /> ≤{' '}
                <Fr
                  n={
                    <>
                      (1 − <V>γ</V>) <K $c={COL.red}><V>ω</V></K>
                    </>
                  }
                  d={
                    <>
                      2 [<V>C</V> ln<Sp>2</Sp>(<V>T</V>) + <V>C</V>′]
                    </>
                  }
                />
                ,
              </L>
              <L h={40} t={4} w={2}>
                then{' '}
                <Nm>
                  <W1 /> − <Ws />
                </Nm>{' '}
                ≤ <Btm />, and hence,{' '}
                <Nm>
                  <Wk /> − <Wr />
                </Nm>{' '}
                ≤ <Btm /> for all <V>k</V> ≤ <V>t</V> + 1.
              </L>
            </BoxBody>
          </Box>

          <Box $c={COL.head} $h={249} $t={18} $bg="#eef1f8">
            <BoxHead $c={COL.head} $h={37} $b>
              Regularized TD(0) induction step
            </BoxHead>
            <BoxBody $p={10}>
              <L h={34} t={9} a="j">
                For the regularized TD(0) update, for large enough <V>T</V>, for a fixed <V>t</V> ≤ <V>T</V>,{' '}
                <K $c={COL.pink}>
                  if{' '}
                  <Nm>
                    <Wk /> − <Wr />
                  </Nm>{' '}
                  ≤ <Btm /> for
                </K>
              </L>
              <L h={34} t={1}>
                <K $c={COL.pink}>
                  all <V>k</V> ≤ <V>t</V>
                </K>{' '}
                and
              </L>
              <L h={84} t={3} a="c" w={4}>
                <E0 /> ≤{' '}
                <Fr
                  n={<V>λ</V>}
                  d={
                    <>
                      [<V>C</V> ln<Sp>2</Sp>(<V>T</V>) + <V>C</V>′] + (8 + 2<V>λ</V>
                      <Sp>2</Sp>)
                    </>
                  }
                />
                ,
              </L>
              <L h={40} t={4} w={2}>
                then{' '}
                <Nm>
                  <W1 /> − <Wr />
                </Nm>{' '}
                ≤ <Btm />, and hence,{' '}
                <Nm>
                  <Wk /> − <Wr />
                </Nm>{' '}
                ≤ <Btm /> for all <V>k</V> ≤ <V>t</V> + 1.
              </L>
            </BoxBody>
          </Box>
        </BBody>
      </Block>

      <Block>
        <BTitle>Convergence rates (Markovian sampling)</BTitle>
        <BBody $h={1458} $pt={21}>
          <L h={36}>
            <Bd $c={COL.blue}>4.&nbsp; Convergence rates.</Bd>
          </L>
          <Box $c={COL.box} $h={297} $t={20} $bg="#fff">
            <BoxHead $c={COL.box} $h={38}>
              Convergence of standard TD(0)
            </BoxHead>
            <BoxBody $p={16}>
              <L h={36} t={6} a="j">
                Under Assumptions 1-3, the standard TD(0) update with exponential step-sizes <Et /> = <E0 />
                <At />, where
              </L>
              <L h={42}>
                <E0 /> ={' '}
                <Fr
                  s={0.7}
                  n={
                    <>
                      (1−<V>γ</V>) <V>ω</V>
                    </>
                  }
                  d={
                    <>
                      2 [<V>C</V> ln<Sp>2</Sp>(<V>T</V>)+<V>C</V>′]
                    </>
                  }
                />
                , <At /> = <V>α</V>
                <Sp>
                  <V>t</V>
                </Sp>{' '}
                = <OneT e={<><V>t</V>/<V>T</V></>} />, and large enough <V>T</V>, achieves the following convergence rate:
              </L>
              <L h={100} t={13} i={174} w={5}>
                <Ex /> <Dl $s={1.6}>[</Dl>
                <Nm>
                  <V>w</V>
                  <Sb>
                    <V>T</V>+1
                  </Sb>{' '}
                  − <Ws />
                </Nm>
                <Dl $s={1.6}>]</Dl> = <V>O</V> <Dl $s={3}>(</Dl>exp <Dl $s={2.3}>(</Dl>−
                <Fr
                  n={
                    <>
                      <V>ω</V>
                      <Sp>2</Sp>
                      <V>T</V>
                    </>
                  }
                  d={
                    <>
                      ln<Sp>3</Sp>(<V>T</V>)
                    </>
                  }
                />
                <Dl $s={2.3}>)</Dl> +{' '}
                <Fr
                  n={
                    <>
                      ln<Sp>4</Sp>(<V>T</V>)
                    </>
                  }
                  d={
                    <>
                      <V>ω</V>
                      <Sp>2</Sp>
                      <V>T</V>
                    </>
                  }
                />
                exp <Dl $s={2.3}>(</Dl>
                <Fr n={<V>m</V>} d={<>ln(1/<V>ρ</V>)</>} />
                <Dl $s={2.3}>)</Dl>
                <Dl $s={3}>)</Dl>,
              </L>
              <L h={50} t={4}>
                where <V>m</V> and <V>ρ</V> are constants related to mixing time as <Tm /> ={' '}
                <Fr
                  s={0.7}
                  n={
                    <>
                      ln(4<V>Tm</V>/<E0 />)
                    </>
                  }
                  d={<>ln(1/<V>ρ</V>)</>}
                />
                .
              </L>
            </BoxBody>
          </Box>

          <Box $c={COL.box} $h={320} $t={19} $bg="#fff">
            <BoxHead $c={COL.box} $h={38}>
              Convergence of regularized TD(0) without knowledge of <V>ω</V>
            </BoxHead>
            <BoxBody $p={16}>
              <L h={34} t={6}>
                Under Assumptions 1-3, the regularized TD(0) with exponential step-size <Et /> = <E0 />
                <At />,
              </L>
              <L h={42} t={2} a="j">
                where <E0 /> ={' '}
                <Fr
                  s={0.7}
                  n={<V>λ</V>}
                  d={
                    <>
                      [<V>C</V> ln<Sp>2</Sp>(<V>T</V>)+<V>C</V>′]+(8+2<V>λ</V>
                      <Sp>2</Sp>)
                    </>
                  }
                />
                , <At /> = <V>α</V>
                <Sp>
                  <V>t</V>
                </Sp>{' '}
                = <OneT e={<><V>t</V>/<V>T</V></>} />, and large enough <V>T</V>, achieves the following conver-
              </L>
              <L h={30}>gence rate:</L>
              <L h={100} t={4} i={174} w={5}>
                <Ex /> <Dl $s={1.6}>[</Dl>
                <Nm>
                  <V>w</V>
                  <Sb>
                    <V>T</V>+1
                  </Sb>{' '}
                  − <Ws />
                </Nm>
                <Dl $s={1.6}>]</Dl> = <V>O</V> <Dl $s={3}>(</Dl>exp <Dl $s={2.3}>(</Dl>−
                <Fr
                  n={
                    <>
                      <V>ω</V>√<V>T</V>
                    </>
                  }
                  d={
                    <>
                      ln<Sp>3</Sp>(<V>T</V>)
                    </>
                  }
                />
                <Dl $s={2.3}>)</Dl> +{' '}
                <Fr
                  n={
                    <>
                      ln<Sp>4</Sp>(<V>T</V>)
                    </>
                  }
                  d={
                    <>
                      <V>ω</V>
                      <Sp>2</Sp>
                      <V>T</V>
                    </>
                  }
                />
                exp <Dl $s={2.3}>(</Dl>
                <Fr n={<V>m</V>} d={<>ln(1/<V>ρ</V>)</>} />
                <Dl $s={2.3}>)</Dl>
                <Dl $s={3}>)</Dl>,
              </L>
              <L h={50} t={6}>
                where <V>m</V> and <V>ρ</V> are constants related to mixing time as <Tm /> ={' '}
                <Fr
                  s={0.7}
                  n={
                    <>
                      ln(2(2+<V>λ</V>)<V>Tm</V>/<E0 />)
                    </>
                  }
                  d={<>ln(1/<V>ρ</V>)</>}
                />
                .
              </L>
            </BoxBody>
          </Box>

          <L h={42} t={14} a="j">
            <Hl>
              <K $c={COL.teal}>✓</K>&nbsp; Using the exponential step-size, regularized linear TD(0) achieves an
            </Hl>
          </L>
          <L h={42} a="j">
            <Hl>
              <Rm>
                <V>O</V> <Dl $s={1.6}>(</Dl>exp(−√<V>T</V>) +{' '}
                <Fr
                  s={0.6}
                  n={
                    <>
                      exp(<V>m</V>/ln(1/<V>ρ</V>))
                    </>
                  }
                  d={<V>T</V>}
                />
                <Dl $s={1.6}>)</Dl>
              </Rm>{' '}
              rate for the last iterate without projections/data-drop or
            </Hl>
          </L>
          <L h={40}>
            <Hl>
              the knowledge of{' '}
              <Rm>
                <V>ω</V>
              </Rm>{' '}
              or <Tm />.
            </Hl>
          </L>
          <Figure $t={5} $i={172}>
            <MarkovChart />
          </Figure>
          <L h={36} t={21} a="c">
            <Cap>
              <Bd>Experiments (Markovian sampling)</Bd>: step-sizes swept per method, best reported. Ours attains the lowest last-iterate
            </Cap>
          </L>
          <L h={36} a="c">
            <Cap>
              error without projections or knowledge of <V>ω</V>, <Tm />.
            </Cap>
          </L>
        </BBody>
      </Block>

      <Block>
        <BTitle>Conclusion &amp; Future Work</BTitle>
        <BBody $h={134} $pt={12}>
          <L h={35} i={52}>
            <Ball />
            <Bd>Parameter-free, last-iterate</Bd> TD(0) under both i.i.d. and Markovian sampling — no
          </L>
          <L h={35} i={52}>
            projections, data drop, or iterate averaging.
          </L>
          <L h={38} t={3} i={52}>
            <Ball />
            <Bd>Future:</Bd> high-probability guarantees and an extension to kernel TD.
          </L>
        </BBody>
      </Block>
    </Col>
  );
}

export default function App() {
  return (
    <>
      <Global />
      <Page>
        <Top>
          <Logos>
            <UbcWrap>
              <UbcLogo />
            </UbcWrap>
            <SfuLogo />
            <Samsung>
              <span>Samsung</span>
              <span>Research</span>
            </Samsung>
          </Logos>
          <TitleCol>
            <Title>Towards Parameter-Free Temporal Difference Learning</Title>
            <Authors>
              Yunxiang Li<Sp>1</Sp>, Mark Schmidt<Sp>1,2</Sp>, Reza Babanezhad<Sp>3</Sp>, Sharan Vaswani<Sp>4</Sp>
            </Authors>
            <Affil>
              <Aff>
                <Sp>1</Sp> University of British Columbia
              </Aff>
              <Aff>
                <Sp>2</Sp> Canada CIFAR AI Chair (Amii)
              </Aff>
              <Aff>
                <Sp>3</Sp> Samsung AI - Montreal
              </Aff>
              <Aff>
                <Sp>4</Sp> Simon Fraser University
              </Aff>
            </Affil>
          </TitleCol>
          <div />
        </Top>
        <Main>
          <LeftColumn />
          <MiddleColumn />
          <RightColumn />
        </Main>
        <Foot />
      </Page>
    </>
  );
}
